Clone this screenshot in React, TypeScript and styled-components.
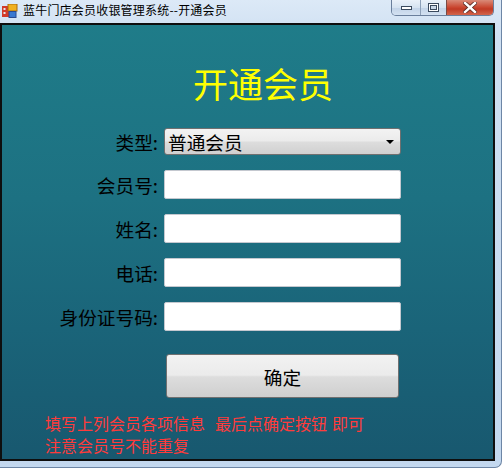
import React from 'react';
import styled, { createGlobalStyle } from 'styled-components';

const GlobalStyle = createGlobalStyle`
  html, body { margin: 0; padding: 0; background: #ffffff; }
  body { font-family: "Noto Sans CJK SC", "Noto Sans", sans-serif; }
  * { box-sizing: border-box; }
`;

const Window = styled.div`
  width: 502px;
  height: 468px;
  display: flex;
  flex-direction: column;
  padding: 0 6px 6px 0;
  background: linear-gradient(180deg, #dce9f7 0%, #cfe0f2 8%, #c3d8ef 100%);
  border-right: 1px solid #6d86a6;
  border-bottom: 1px solid #6d86a6;
  border-bottom-right-radius: 7px;
`;

const TitleBar = styled.div`
  height: 23px;
  display: flex;
  align-items: flex-start;
`;

const AppIcon = styled.svg`
  margin: 4px 0 0 2px;
  flex: none;
`;

const TitleText = styled.div`
  margin-left: 5px;
  font-size: 12px;
  letter-spacing: 0.2px;
  line-height: 20px;
  color: #000;
  white-space: nowrap;
`;

const Spacer = styled.div`
  flex: 1;
`;

const CaptionGroup = styled.div`
  display: flex;
  height: 16px;
  margin-right: 1px;
  border: 1px solid #6a7f9c;
  border-top: none;
  border-radius: 0 0 5px 5px;
  overflow: hidden;
`;

const CaptionButton = styled.div<{ $w: number; $close?: boolean }>`
  width: ${(p) => p.$w}px;
  display: flex;
  align-items: center;
  justify-content: center;
  background: ${(p) =>
    p.$close
      ? 'linear-gradient(180deg, #d98a78 0%, #c9452f 50%, #c03a25 60%, #d2654c 100%)'
      : 'linear-gradient(180deg, #eaf1f9 0%, #d6e3f1 50%, #c3d4e8 55%, #d3e1f1 100%)'};
  border-left: ${(p) => (p.$close ? '1px solid #7a4a44' : '1px solid #8da0b8')};
  &:first-child { border-left: none; }
`;

const Client = styled.div`
  flex: 1;
  border: 2px solid #0e0e0e;
  background: linear-gradient(180deg, #1f7c89 0%, #1d7182 40%, #1a6479 70%, #18586f 100%);
  display: flex;
  flex-direction: column;
  padding-top: 38px;
`;

const Heading = styled.h1`
  margin: 0 0 0 191px;
  font-size: 35px;
  line-height: 40px;
  font-weight: 400;
  color: #ffff00;
`;

const Form = styled.div`
  margin-top: 25px;
  display: grid;
  grid-template-columns: 156px 237px;
  column-gap: 6px;
  row-gap: 15px;
  align-items: center;
`;

const Label = styled.div`
  text-align: right;
  font-size: 18.67px;
  line-height: 24px;
  color: #000;
  white-space: pre;
`;

const Select = styled.div`
  height: 27px;
  border: 1px solid #707070;
  border-radius: 3px;
  background: linear-gradient(180deg, #f3f3f3 0%, #ebebeb 48%, #dddddd 52%, #d0d0d0 100%);
  display: flex;
  align-items: center;
  padding: 0 6px 0 3px;
  font-size: 18.67px;
  color: #000;
`;

const SelectValue = styled.span`
  flex: 1;
  line-height: 24px;
`;

const TextBox = styled.div`
  height: 29px;
  background: #ffffff;
  border: 1px solid #c4c8cf;
  border-radius: 2px;
`;

const SubmitButton = styled.button`
  grid-column: 2;
  margin: 8px 0 0 2px;
  width: 233px;
  height: 44px;
  border: 1px solid #707070;
  border-radius: 3px;
  background: linear-gradient(180deg, #f2f2f2 0%, #ebebeb 48%, #dddddd 52%, #cfcfcf 100%);
  font-family: "Noto Sans CJK SC", sans-serif;
  font-size: 18.67px;
  color: #000;
  padding: 0;
`;

const Notes = styled.div`
  margin: 14px 0 0 43px;
  font-size: 16px;
  line-height: 22px;
  color: #ff3b3b;
  white-space: pre;
`;

const Gap = styled.span<{ $w: number }>`
  display: inline-block;
  width: ${(p) => p.$w}px;
`;

const fields = ['会员号:', '姓名:', '电话:', '身份证号码:'];

export default function App() {
  return (
    <>
      <GlobalStyle />
      <Window>
        <TitleBar>
          <AppIcon width="16" height="14" viewBox="0 0 16 14">
            <rect x="0" y="2" width="7" height="11" fill="#d23a2a" />
            <rect x="1.5" y="4" width="2" height="2" fill="#e8e8e8" />
            <rect x="1.5" y="8" width="2" height="2" fill="#e8e8e8" />
            <rect x="6" y="0" width="9" height="7" fill="#f0b020" stroke="#a86a10" strokeWidth="1" />
            <rect x="7" y="7.5" width="7" height="6" fill="#3a78d0" stroke="#2a4a90" strokeWidth="1" />
          </AppIcon>
          <TitleText>蓝牛门店会员收银管理系统--开通会员</TitleText>
          <Spacer />
          <CaptionGroup>
            <CaptionButton $w={28}>
              <svg width="11" height="5" viewBox="0 0 11 5">
                <rect x="0.5" y="1.5" width="10" height="3" fill="#fff" stroke="#3b4a5e" />
              </svg>
            </CaptionButton>
            <CaptionButton $w={26}>
              <svg width="11" height="9" viewBox="0 0 11 9">
                <rect x="0.5" y="0.5" width="10" height="8" fill="#fff" stroke="#3b4a5e" />
                <rect x="2.5" y="2.5" width="6" height="4" fill="#c8d6e6" stroke="#3b4a5e" />
              </svg>
            </CaptionButton>
            <CaptionButton $w={47} $close>
              <svg width="14" height="11" viewBox="0 0 14 11">
                <path d="M2 1 L12 10 M12 1 L2 10" stroke="#5a2a24" strokeWidth="4" strokeLinecap="square" />
                <path d="M2 1 L12 10 M12 1 L2 10" stroke="#ffffff" strokeWidth="2.4" strokeLinecap="square" />
              </svg>
            </CaptionButton>
          </CaptionGroup>
        </TitleBar>
        <Client>
          <Heading>开通会员</Heading>
          <Form>
            <Label>类型:</Label>
            <Select>
              <SelectValue>普通会员</SelectValue>
              <svg width="8" height="4" viewBox="0 0 8 4">
                <polygon points="0,0 8,0 4,4" fill="#000" />
              </svg>
            </Select>
            {fields.map((f) => (
              <React.Fragment key={f}>
                <Label>{f}</Label>
                <TextBox />
              </React.Fragment>
            ))}
            <SubmitButton>确定</SubmitButton>
          </Form>
          <Notes>
            填写上列会员各项信息<Gap $w={10} />最后点确定按钮<Gap $w={5} />即可
            {'\n'}注意会员号不能重复
          </Notes>
        </Client>
      </Window>
    </>
  );
}
